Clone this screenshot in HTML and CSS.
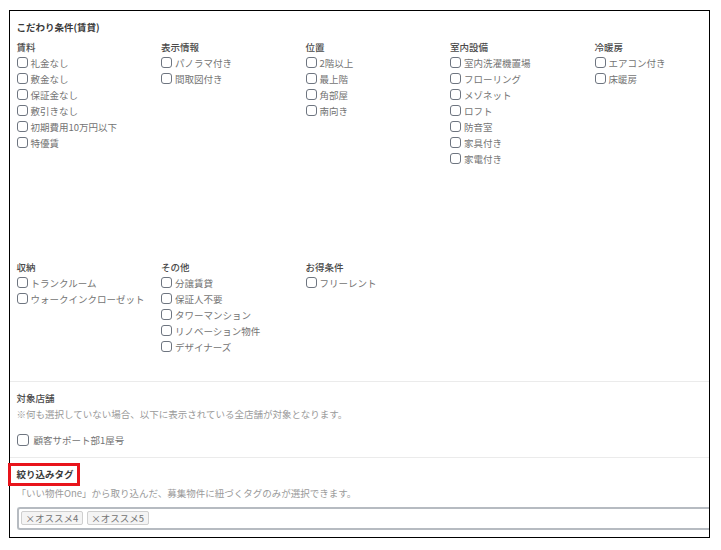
FILE: index.html
```html
<!DOCTYPE html>
<html lang="ja">
<head>
    <meta charset="UTF-8">
    <meta name="viewport" content="width=device-width, initial-scale=1.0">
    <title>こだわり条件</title>
    <link rel="stylesheet" href="styles.css">
</head>
<body>
    <div class="frame">
        <div class="section section_kodawari">
            <div class="title">こだわり条件(賃貸)</div>
            <div class="groups">
                <div class="group">
                    <div class="group_head">賃料</div>
                    <label class="check"><input type="checkbox">礼金なし</label>
                    <label class="check"><input type="checkbox">敷金なし</label>
                    <label class="check"><input type="checkbox">保証金なし</label>
                    <label class="check"><input type="checkbox">敷引きなし</label>
                    <label class="check"><input type="checkbox">初期費用10万円以下</label>
                    <label class="check"><input type="checkbox">特優賃</label>
                </div>
                <div class="group">
                    <div class="group_head">表示情報</div>
                    <label class="check"><input type="checkbox">パノラマ付き</label>
                    <label class="check"><input type="checkbox">間取図付き</label>
                </div>
                <div class="group">
                    <div class="group_head">位置</div>
                    <label class="check"><input type="checkbox">2階以上</label>
                    <label class="check"><input type="checkbox">最上階</label>
                    <label class="check"><input type="checkbox">角部屋</label>
                    <label class="check"><input type="checkbox">南向き</label>
                </div>
                <div class="group">
                    <div class="group_head">室内設備</div>
                    <label class="check"><input type="checkbox">室内洗濯機置場</label>
                    <label class="check"><input type="checkbox">フローリング</label>
                    <label class="check"><input type="checkbox">メゾネット</label>
                    <label class="check"><input type="checkbox">ロフト</label>
                    <label class="check"><input type="checkbox">防音室</label>
                    <label class="check"><input type="checkbox">家具付き</label>
                    <label class="check"><input type="checkbox">家電付き</label>
                </div>
                <div class="group">
                    <div class="group_head">冷暖房</div>
                    <label class="check"><input type="checkbox">エアコン付き</label>
                    <label class="check"><input type="checkbox">床暖房</label>
                </div>
                <div class="group">
                    <div class="group_head">収納</div>
                    <label class="check"><input type="checkbox">トランクルーム</label>
                    <label class="check"><input type="checkbox">ウォークインクローゼット</label>
                </div>
                <div class="group">
                    <div class="group_head">その他</div>
                    <label class="check"><input type="checkbox">分譲賃貸</label>
                    <label class="check"><input type="checkbox">保証人不要</label>
                    <label class="check"><input type="checkbox">タワーマンション</label>
                    <label class="check"><input type="checkbox">リノベーション物件</label>
                    <label class="check"><input type="checkbox">デザイナーズ</label>
                </div>
                <div class="group">
                    <div class="group_head">お得条件</div>
                    <label class="check"><input type="checkbox">フリーレント</label>
                </div>
            </div>
        </div>
        <div class="section section_shop">
            <div class="group_head">対象店舗</div>
            <div class="note">※何も選択していない場合、以下に表示されている全店舗が対象となります。</div>
            <label class="check check_shop"><input type="checkbox">顧客サポート部1屋号</label>
        </div>
        <div class="section section_tag">
            <div class="tag_label">絞り込みタグ</div>
            <div class="note">「いい物件One」から取り込んだ、募集物件に紐づくタグのみが選択できます。</div>
            <div class="tag_input">
                <span class="tag">×オススメ4</span>
                <span class="tag">×オススメ5</span>
            </div>
        </div>
    </div>
</body>
</html>
```
FILE: styles.css
```css
html, body {
    margin: 0;
    background-color: #fff;
}
body {
    font-family: "Noto Sans CJK JP", "Noto Sans", sans-serif;
    font-size: 9.5px;
    color: #737373;
}
.frame {
    box-sizing: border-box;
    width: 701px;
    height: 528px;
    margin: 10px 0 0 9px;
    border: 1.5px solid #000;
}
.section {
    padding-left: 6.5px;
    border-bottom: 1px solid #ebebeb;
}
.section_kodawari {
    padding-top: 7.5px;
    padding-bottom: 26px;
}
.title {
    line-height: 16px;
    margin-bottom: 4px;
    font-weight: bold;
    color: #3a3a3a;
}
.groups {
    display: grid;
    grid-template-columns: repeat(5, 144.5px);
    grid-template-rows: 220px auto;
}
.group_head {
    line-height: 16px;
    font-weight: 500;
    color: #4a4a4a;
}
.check {
    display: flex;
    align-items: center;
    height: 16px;
    white-space: nowrap;
}
.check input {
    appearance: none;
    box-sizing: border-box;
    width: 11px;
    height: 11px;
    margin: 0 3px 0 0;
    border: 1px solid #6e7580;
    border-radius: 3px;
    background: #fff;
}

/* 対象店舗 */
.section_shop {
    padding-top: 8px;
    padding-bottom: 9px;
}
.note {
    line-height: 16px;
    color: #9a9a9a;
}
.check_shop {
    margin-top: 10px;
}
.check_shop input {
    width: 12px;
    height: 12px;
    margin-right: 5px;
}

/* 絞り込みタグ */
.section_tag {
    padding-top: 5px;
    padding-bottom: 6px;
    border-bottom: none;
}
.tag_label {
    display: inline-block;
    box-sizing: border-box;
    height: 23px;
    line-height: 17px;
    margin-left: -8.5px;
    margin-bottom: -1px;
    padding: 0 3px 0 5.5px;
    border: 3px solid #e8141b;
    font-weight: bold;
    color: #3a3a3a;
}
.note + .tag_input {
    margin-top: 6px;
}
.tag_input {
    box-sizing: border-box;
    display: flex;
    align-items: center;
    gap: 4px;
    height: 23px;
    padding: 0 2.5px;
    border: 2px solid #b6bbc1;
    border-right: none;
    border-radius: 3px 0 0 3px;
}
.tag {
    box-sizing: border-box;
    height: 14px;
    line-height: 12px;
    padding: 0 3.5px;
    border: 1px solid #cfcfcf;
    border-radius: 2px;
    background-color: #f4f4f4;
    color: #737373;
}
```
